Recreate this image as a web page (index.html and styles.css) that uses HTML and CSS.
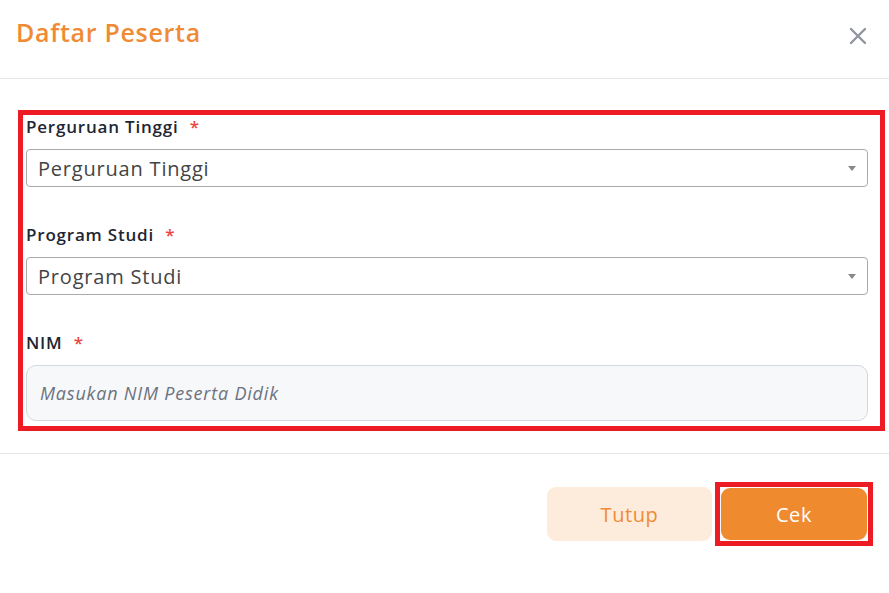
FILE: index.html
```html
<!DOCTYPE html>
<html lang="id">
<head>
<meta charset="utf-8">
<title>Daftar Peserta</title>
<link rel="stylesheet" href="styles.css">
</head>
<body>
<div class="modal">
  <header class="modal-header">
    <h1 class="modal-title">Daftar Peserta</h1>
    <button class="close" aria-label="Tutup">
      <svg width="18" height="18" viewBox="0 0 18 18"><path d="M2 2 L16 16 M16 2 L2 16" stroke="#8f949f" stroke-width="2.4" stroke-linecap="round" fill="none"/></svg>
    </button>
  </header>
  <div class="modal-body">
    <div class="form-box">
      <div class="field">
        <label class="label">Perguruan Tinggi <span class="req">*</span></label>
        <div class="select"><span>Perguruan Tinggi</span><span class="arrow"></span></div>
      </div>
      <div class="field">
        <label class="label">Program Studi <span class="req">*</span></label>
        <div class="select"><span>Program Studi</span><span class="arrow"></span></div>
      </div>
      <div class="field last">
        <label class="label">NIM <span class="req">*</span></label>
        <input class="input" type="text" placeholder="Masukan NIM Peserta Didik">
      </div>
    </div>
  </div>
  <footer class="modal-footer">
    <button class="btn btn-light">Tutup</button>
    <span class="highlight"><button class="btn btn-primary">Cek</button></span>
  </footer>
</div>
</body>
</html>
```
FILE: styles.css
```css
* { box-sizing: border-box; }
html, body { margin: 0; padding: 0; background: #fff; }
body { font-family: "Open Sans", Lato, sans-serif; color: #1f2633; }

.modal { width: 889px; }

.modal-header {
  height: 79px;
  border-bottom: 1px solid #e6e6e6;
  display: flex;
  align-items: flex-start;
  justify-content: space-between;
  padding: 0 22px 0 16px;
}
.modal-title {
  margin: 0;
  padding-top: 15px;
  font-size: 25px;
  line-height: 34px;
  font-weight: 600;
  letter-spacing: 0.7px;
  color: #f08b35;
}
.close {
  margin-top: 27px;
  padding: 0;
  border: 0;
  background: none;
  width: 18px;
  height: 18px;
  display: flex;
}

.modal-body { padding: 31px 4px 22px 18px; }
.form-box {
  border: 5px solid #ed1c24;
  padding: 0 12px 5px 3px;
}
.field { margin-bottom: 36px; }
.field.last { margin-bottom: 0; }
.label {
  display: block;
  font-size: 17px;
  line-height: 23px;
  font-weight: 600;
  letter-spacing: 0.8px;
  color: #1f2633;
  margin-bottom: 11px;
}
.req { color: #ef4444; margin-left: 6px; }

.select {
  height: 38px;
  border: 1px solid #aaaaaa;
  border-radius: 4px;
  display: flex;
  align-items: center;
  justify-content: space-between;
  padding: 0 11px 0 11px;
  font-size: 20px;
  letter-spacing: 0.8px;
  color: #444;
}
.arrow {
  width: 0; height: 0;
  border-left: 4.5px solid transparent;
  border-right: 4.5px solid transparent;
  border-top: 5px solid #888;
}

.input {
  display: block;
  width: 100%;
  height: 56px;
  border: 1px solid #d4d7dd;
  border-radius: 10px;
  background: #f7f8fa;
  padding: 0 13px;
  font-family: "Open Sans", Lato, sans-serif;
  font-size: 18px;
  letter-spacing: 0.8px;
  outline: none;
}
.input::placeholder { color: #6b7280; font-style: italic; }

.modal-footer {
  border-top: 1px solid #e6e6e6;
  padding: 28px 16px 0 0;
  display: flex;
  justify-content: flex-end;
  align-items: center;
  gap: 3px;
}
.btn {
  border: 0;
  font-family: "Open Sans", Lato, sans-serif;
  font-size: 20px;
  font-weight: 500;
  letter-spacing: 0.6px;
  cursor: pointer;
}
.btn-light {
  width: 165px;
  height: 54px;
  border-radius: 9px;
  background: #fdecdb;
  color: #f08b35;
}
.highlight {
  display: flex;
  border: 5px solid #ed1c24;
  padding: 1px;
  background: #fff;
}
.btn-primary {
  width: 146px;
  height: 52px;
  border-radius: 9px;
  background: #ef8a2f;
  color: #fff;
}
```
